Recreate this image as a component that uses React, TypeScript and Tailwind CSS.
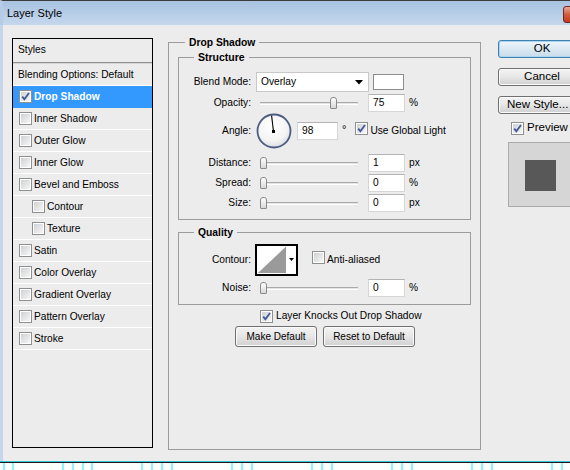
import React from "react";

const Check = ({ checked = false }: { checked?: boolean }) => (
  <span className="relative inline-block w-[13px] h-[13px] shrink-0 border border-[#8e8f8f] bg-white">
    <span className="absolute inset-[1px] bg-gradient-to-br from-[#cfd1d4] to-[#f6f6f6]" />
    {checked && (
      <svg className="absolute left-0 top-0" width="11" height="11" viewBox="0 0 11 11">
        <path d="M2.2 5.6 L4.4 8.2 L9 2" stroke="#41589a" strokeWidth="1.8" fill="none" />
      </svg>
    )}
  </span>
);

const Slider = ({ value }: { value: number }) => {
  const left = Math.max(0, (value / 100) * 98 - 3.5);
  return (
    <div className="relative w-[98px] h-[14px] shrink-0">
      <div className="absolute left-0 right-0 top-[6px] h-[3px] border-t border-[#a9a9a9] border-b border-b-white bg-[#e4e4e4]" />
      <div
        className="absolute top-[1px] w-[7px] h-[12px] rounded-t-[3px] rounded-b-[1px] border border-[#8a8a8a] bg-gradient-to-b from-white to-[#d8d8d8]"
        style={{ left }}
      />
    </div>
  );
};

const Field = ({ v, className }: { v: string; className: string }) => (
  <div className={"h-[18px] shrink-0 bg-white border border-[#d6d6d6] border-t-[#b3b3b3] flex items-center pl-[4px] " + className}>
    {v}
  </div>
);

const Label = ({ children }: { children: React.ReactNode }) => (
  <div className="w-[72px] shrink-0 text-right">{children}</div>
);

const SliderRow = ({ label, value, unit, cls }: { label: string; value: number; unit: string; cls: string }) => (
  <div className={"flex items-center h-[20px] " + cls}>
    <Label>{label}</Label>
    <div className="ml-[9px]">
      <Slider value={value} />
    </div>
    <Field v={String(value)} className="ml-[10px] w-[37px]" />
    <span className="ml-[4px]">{unit}</span>
  </div>
);

const WinButton = ({ children, className }: { children: React.ReactNode; className: string }) => (
  <div
    className={
      "shrink-0 flex items-center justify-center rounded-[3px] border border-[#707070] bg-gradient-to-b from-[#f3f3f3] via-[#e6e6e6] to-[#d0d0d0] shadow-[inset_0_0_0_1px_#fbfbfb] " +
      className
    }
  >
    {children}
  </div>
);

const listItems: { name: string; sub?: boolean; sel?: boolean }[] = [
  { name: "Drop Shadow", sel: true },
  { name: "Inner Shadow" },
  { name: "Outer Glow" },
  { name: "Inner Glow" },
  { name: "Bevel and Emboss" },
  { name: "Contour", sub: true },
  { name: "Texture", sub: true },
  { name: "Satin" },
  { name: "Color Overlay" },
  { name: "Gradient Overlay" },
  { name: "Pattern Overlay" },
  { name: "Stroke" },
];

const ticks = [3, 12, 62, 72, 82, 91, 141, 151, 161, 171, 231, 241, 251, 311, 321, 331, 391, 401, 411, 471, 481, 491, 551, 561];

export default function App() {
  return (
    <div className="relative w-[570px] h-[470px] overflow-hidden bg-white flex flex-col font-['Liberation_Sans',Arial,sans-serif] text-[10.2px] text-black">
      {/* title bar */}
      <div className="relative h-[25px] shrink-0 border-t border-[#3c3c3c] border-l-[3px] border-l-[#b7cbe6] bg-gradient-to-b from-[#a8c2e0] to-[#c5d7ed] flex items-center pl-[4px]">
        <span className="text-[11px] leading-[13px] pt-[1px]">Layer Style</span>
        <div className="absolute left-[560px] top-[5px] w-[43px] h-[17px] rounded-[3px] border border-[#6b2a22] bg-gradient-to-b from-[#eaa696] via-[#d35a42] to-[#c23a20]" />
      </div>

      {/* body */}
      <div className="h-[436px] shrink-0 flex items-start bg-[#ececec] border-l-[3px] border-[#c6d5ea] pl-[9px]">
        {/* styles list */}
        <div className="mt-[13px] w-[141px] h-[410px] shrink-0 border border-black flex flex-col">
          <div className="h-[23px] flex items-center pl-[5px] pb-[1px]">Styles</div>
          <div className="h-[1px] bg-[#8f8f8f]" />
          <div className="h-[1px] bg-[#d6d6d6]" />
          <div className="h-[21px] flex items-center pl-[5px] border-b border-white box-content">Blending Options: Default</div>
          {listItems.map((it) => (
            <div
              key={it.name}
              className={
                "h-[21px] box-content flex items-center gap-[2px] " +
                (it.sub ? "pl-[19px] " : "pl-[6px] ") +
                (it.sel ? "bg-[#3399ff] text-white font-bold border-b border-[#3399ff]" : "border-b border-white")
              }
            >
              <Check checked={!!it.sel} />
              <span>{it.name}</span>
            </div>
          ))}
        </div>

        {/* Drop Shadow group */}
        <div className="relative mt-[17px] ml-[15px] w-[313px] h-[408px] shrink-0 border border-[#9c9c9c] pl-[9px] pr-[9px] pt-[14px]">
          <span className="absolute left-[16px] -top-[7px] px-[4px] bg-[#ececec] font-bold text-[10.3px] leading-[13px]">Drop Shadow</span>

          {/* Structure */}
          <div className="relative h-[163px] border border-[#9c9c9c]">
            <span className="absolute left-[15px] -top-[7px] px-[4px] bg-[#ececec] font-bold text-[10.5px] leading-[13px]">Structure</span>

            <div className="flex items-center h-[20px] mt-[14px]">
              <Label>Blend Mode:</Label>
              <div className="ml-[5px] w-[113px] h-[20px] shrink-0 bg-white border border-[#c8c8c8] flex items-center justify-between pl-[4px] pr-[5px]">
                <span>Overlay</span>
                <svg width="8" height="5" viewBox="0 0 8 5">
                  <path d="M0 0 H8 L4 4.5 Z" fill="#000" />
                </svg>
              </div>
              <div className="ml-[4px] w-[31px] h-[16px] shrink-0 bg-white border border-[#8c8c8c]" />
            </div>

            <SliderRow label="Opacity:" value={75} unit="%" cls="mt-[1px]" />

            <div className="flex items-center h-[36px]">
              <Label>Angle:</Label>
              <svg className="ml-[5px] shrink-0" width="36" height="36" viewBox="0 0 36 36">
                <defs>
                  <radialGradient id="dial" cx="45%" cy="35%" r="65%">
                    <stop offset="0%" stopColor="#ffffff" />
                    <stop offset="70%" stopColor="#f4f4f4" />
                    <stop offset="100%" stopColor="#d9dde4" />
                  </radialGradient>
                </defs>
                <circle cx="18" cy="18" r="16.5" fill="url(#dial)" stroke="#4d5d82" strokeWidth="1.8" />
                <line x1="17.5" y1="18.5" x2="15.6" y2="2.6" stroke="#000" strokeWidth="1.1" />
                <rect x="16" y="17" width="3" height="3" fill="#000" />
              </svg>
              <Field v="98" className="ml-[5px] w-[41px]" />
              <span className="ml-[4px] self-start mt-[8px] text-[11px]">°</span>
              <div className="ml-[9px]">
                <Check checked />
              </div>
              <span className="ml-[2px]">Use Global Light</span>
            </div>

            <SliderRow label="Distance:" value={1} unit="px" cls="mt-[4px]" />
            <SliderRow label="Spread:" value={0} unit="%" cls="" />
            <SliderRow label="Size:" value={0} unit="px" cls="" />
          </div>

          {/* Quality */}
          <div className="relative mt-[12px] h-[73px] border border-[#9c9c9c]">
            <span className="absolute left-[15px] -top-[7px] px-[4px] bg-[#ececec] font-bold text-[10.3px] leading-[13px]">Quality</span>
            <div className="flex items-center h-[32px] mt-[11px]">
              <Label>Contour:</Label>
              <svg className="ml-[4px] shrink-0" width="43" height="32" viewBox="0 0 43 32">
                <rect x="0" y="0" width="43" height="32" fill="#000" />
                <rect x="2" y="2" width="39" height="28" fill="#ffffff" />
                <polygon points="3,29 31,2.5 31,29" fill="#9a9a9a" />
                <path d="M34 14 H39 L36.5 17 Z" fill="#000" />
              </svg>
              <div className="ml-[14px]">
                <Check />
              </div>
              <span className="ml-[2px]">Anti-aliased</span>
            </div>
            <SliderRow label="Noise:" value={0} unit="%" cls="mt-[2px]" />
          </div>

          <div className="flex items-center h-[14px] mt-[4px] pl-[82px] gap-[3px]">
            <Check checked />
            <span>Layer Knocks Out Drop Shadow</span>
          </div>

          <div className="flex mt-[3px] ml-[57px] gap-[6px] text-[10px]">
            <WinButton className="w-[82px] h-[21px]">Make Default</WinButton>
            <WinButton className="w-[92px] h-[21px]">Reset to Default</WinButton>
          </div>
        </div>

        {/* right column */}
        <div className="mt-[15px] ml-[17px] w-[88px] shrink-0 flex flex-col text-[11.5px]">
          <div className="h-[18px] shrink-0 flex items-center justify-center rounded-[3px] border border-[#3c7fb1] bg-gradient-to-b from-[#eef6fb] via-[#dbe9f3] to-[#c8dcea] shadow-[inset_0_0_0_1px_#a9d5f0]">
            OK
          </div>
          <WinButton className="mt-[10px] h-[18px]">Cancel</WinButton>
          <WinButton className="mt-[10px] h-[18px] !justify-start pl-[8px]">New Style...</WinButton>
          <div className="mt-[7px] h-[14px] flex items-center pl-[13px] gap-[3px]">
            <Check checked />
            <span>Preview</span>
          </div>
          <div className="mt-[7px] ml-[10px] w-[66px] h-[65px] shrink-0 bg-[#d6d6d6] border border-[#ababab] pl-[16px] pt-[17px]">
            <div className="w-[31px] h-[31px] bg-[#585858]" />
          </div>
        </div>
      </div>

      {/* bottom edges */}
      <div className="h-[1px] shrink-0 bg-[#36c4d3]" />
      <div className="h-[1px] shrink-0 bg-[#1d1d1d]" />
      <svg className="shrink-0" width="570" height="7" viewBox="0 0 570 7">
        <rect width="570" height="7" fill="#ffffff" />
        {ticks.map((x) => (
          <rect key={x} x={x} y="0" width="2" height="7" fill="#8ff6f8" />
        ))}
      </svg>
    </div>
  );
}
